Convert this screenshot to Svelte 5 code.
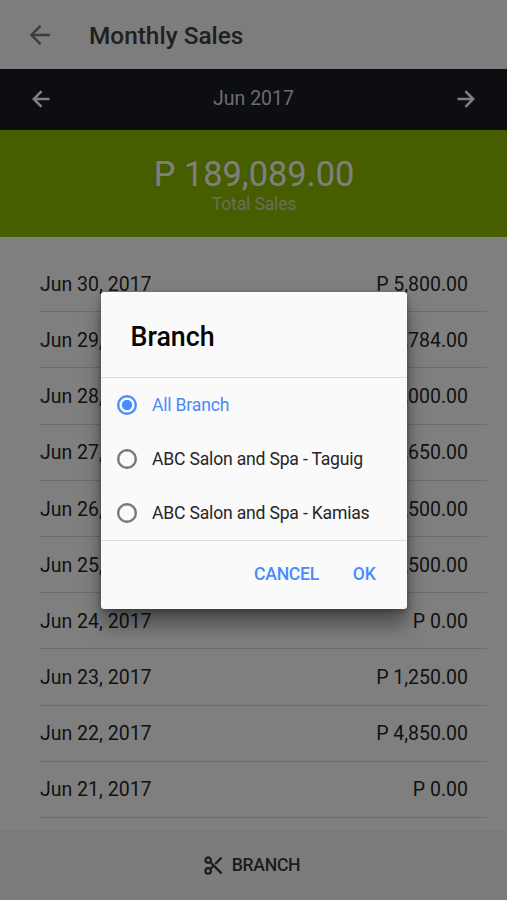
<script>
  const rows = [
    ['Jun 30, 2017', 'P 5,800.00'],
    ['Jun 29, 2017', 'P 3,784.00'],
    ['Jun 28, 2017', 'P 9,000.00'],
    ['Jun 27, 2017', 'P 4,650.00'],
    ['Jun 26, 2017', 'P 6,500.00'],
    ['Jun 25, 2017', 'P 7,500.00'],
    ['Jun 24, 2017', 'P 0.00'],
    ['Jun 23, 2017', 'P 1,250.00'],
    ['Jun 22, 2017', 'P 4,850.00'],
    ['Jun 21, 2017', 'P 0.00']
  ];
  const branches = ['All Branch', 'ABC Salon and Spa - Taguig', 'ABC Salon and Spa - Kamias'];
  let selected = $state(0);
</script>

<div class="screen">
  <header>
    <svg class="back" width="20" height="20" viewBox="0 0 20 20"><path d="M20 10H2M10.5 .9 1.4 10l9.1 9.1" /></svg>
    <h1>Monthly Sales</h1>
  </header>
  <nav>
    <svg width="18" height="18" viewBox="0 0 18 18"><path d="M17.5 9H2M9.6 1.2 1.8 9l7.8 7.8" /></svg>
    <span>Jun 2017</span>
    <svg width="18" height="18" viewBox="0 0 18 18"><path d="M.5 9H16M8.4 1.2 16.2 9l-7.8 7.8" /></svg>
  </nav>
  <section class="total">
    <strong>P 189,089.00</strong>
    <span>Total Sales</span>
  </section>
  <main>
    {#each rows as [date, amount]}
      <div class="row"><span>{date}</span><span>{amount}</span></div>
    {/each}
  </main>
  <footer>
    <svg width="19" height="19" viewBox="0 0 19 19">
      <circle cx="4.2" cy="4.1" r="2.7" /><circle cx="4.2" cy="14.9" r="2.7" />
      <path d="m6.2 6 11.4 11.4M6.2 13l3.1-3M11.2 8l6.4-6.4" />
    </svg>
    <span>BRANCH</span>
  </footer>

  <div class="backdrop">
    <div class="dialog" role="dialog" aria-label="Branch">
      <h2>Branch</h2>
      <div class="options">
        {#each branches as branch, i}
          <button class="option" class:on={selected === i} onclick={() => (selected = i)}>
            <i></i><span>{branch}</span>
          </button>
        {/each}
      </div>
      <div class="actions"><button>CANCEL</button><button>OK</button></div>
    </div>
  </div>
</div>

<style>
  .screen {
    position: relative;
    width: 507px;
    height: 900px;
    overflow: hidden;
    display: flex;
    flex-direction: column;
    background: #fff;
    color: #262626;
    font-family: Roboto, sans-serif;
  }
  svg { flex: none; fill: none; stroke: currentColor; }
  header {
    flex: none;
    height: 69px;
    display: flex;
    align-items: center;
    padding: 1px 0 0 30px;
    box-sizing: border-box;
    background: #fbfbfb;
  }
  .back { stroke-width: 2.4; color: #777; }
  h1 { margin: 0 0 0 39px; font-size: 24.4px; font-weight: 500; color: #404040; }
  nav {
    flex: none;
    height: 61px;
    box-sizing: border-box;
    display: flex;
    align-items: center;
    justify-content: space-between;
    padding: 0 32px 2px 32px;
    background: #1b1c25;
    color: #d8d8dc;
    font-size: 19.5px;
  }
  nav svg { stroke-width: 2.5; color: #fff; }
  .total {
    flex: none;
    height: 107px;
    box-sizing: border-box;
    padding: 25px 0 0 1px;
    display: flex;
    flex-direction: column;
    align-items: center;
    background: #8dbb00;
  }
  .total strong { font-size: 34.4px; line-height: 38px; font-weight: 400; color: #fff; }
  .total span { font-size: 17.6px; letter-spacing: -.15px; line-height: 22px; color: #d4dcb8; }
  main { flex: 1; min-height: 0; padding: 19px 20px 0 40px; }
  .row {
    height: 56.2px;
    box-sizing: border-box;
    display: flex;
    align-items: center;
    justify-content: space-between;
    padding: 1.4px 19px 0 0;
    border-bottom: 1px solid #dadada;
    font-size: 19.5px;
  }
  footer {
    flex: none;
    height: 70px;
    box-sizing: border-box;
    display: flex;
    align-items: center;
    justify-content: center;
    gap: 9px;
    padding: 0 3px 1px 0;
    border-top: 1px solid #efefef;
    background: #f8f8f8;
    color: #393939;
    font-size: 17.6px;
    letter-spacing: -.3px;
    font-weight: 500;
  }
  footer svg { stroke-width: 2.2; }
  .backdrop {
    position: absolute;
    inset: 0;
    display: flex;
    align-items: center;
    justify-content: center;
    padding-top: 1px;
    background: rgba(0, 0, 0, .5);
  }
  .dialog {
    width: 306px;
    height: 317px;
    display: flex;
    flex-direction: column;
    background: #fafafa;
    border-radius: 3px;
    box-shadow: 0 16px 20px rgba(0, 0, 0, .4), 0 2px 6px rgba(0, 0, 0, .3);
  }
  h2 { height: 85px; margin: 0; padding: 0 30px; box-sizing: border-box; line-height: 90px; font-size: 26.8px; font-weight: 500; color: #050505; }
  .options { flex: none; border: solid #ddd; border-width: 1px 0; padding: .4px 0 .6px; }
  button { font: inherit; letter-spacing: inherit; color: inherit; border: 0; background: none; padding: 0; cursor: pointer; }
  .option { width: 100%; height: 53.8px; display: flex; align-items: center; padding: 0 16px; gap: 15.5px; font-size: 17.6px; letter-spacing: -.2px; white-space: nowrap; }
  .option i { flex: none; width: 20px; height: 20px; box-sizing: border-box; border: 2.4px solid #757575; border-radius: 50%; box-shadow: inset 0 0 0 .4px currentColor; }
  .option:not(.on) i { box-shadow: inset 0 0 0 .4px #757575; }
  .on { color: #488aff; }
  .on i { border-color: #488aff; background: radial-gradient(circle, #488aff 0 4.8px, transparent 5.4px); }
  .actions { flex: 1; display: flex; align-items: center; justify-content: flex-end; gap: 34px; padding: 0 31px 2px 0; color: #488aff; font-size: 17.6px; letter-spacing: -.3px; font-weight: 500; }
</style>
